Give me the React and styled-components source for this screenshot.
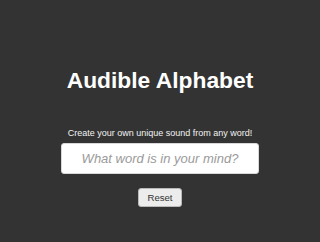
import styled, { createGlobalStyle } from 'styled-components'

const GlobalStyle = createGlobalStyle`
  html, body {
    margin: 0;
    padding: 0;
    background: #333333;
  }
  body {
    font-family: "Liberation Sans", Arial, Helvetica, sans-serif;
  }
`

const Page = styled.main`
  min-height: 242px;
  display: flex;
  flex-direction: column;
  align-items: center;
  padding-top: 66px;
  box-sizing: border-box;
`

const Title = styled.h1`
  margin: 0;
  font-size: 22.8px;
  line-height: 28px;
  font-weight: 700;
  color: #ffffff;
`

const Tagline = styled.p`
  margin: 33px 0 0;
  font-size: 9px;
  line-height: 12px;
  color: #f2f2f2;
  white-space: nowrap;
`

const WordInput = styled.input`
  margin-top: 4px;
  width: 198px;
  height: 31px;
  box-sizing: border-box;
  border: 1px solid #d8d8d8;
  border-radius: 3px;
  background: #ffffff;
  font-family: inherit;
  font-size: 13px;
  font-style: italic;
  text-align: center;
  color: #333;
  outline: none;

  &::placeholder {
    color: #9a9a9a;
  }
`

const ResetButton = styled.button`
  margin-top: 14px;
  width: 44px;
  height: 19px;
  padding: 0;
  box-sizing: border-box;
  border: 1px solid #b9b9b9;
  border-radius: 3px;
  background: #ececec;
  color: #333;
  font-family: inherit;
  font-size: 9.6px;
  cursor: pointer;
`

export default function App() {
  return (
    <>
      <GlobalStyle />
      <Page>
        <Title>Audible Alphabet</Title>
        <Tagline>Create your own unique sound from any word!</Tagline>
        <WordInput placeholder="What word is in your mind?" />
        <ResetButton>Reset</ResetButton>
      </Page>
    </>
  )
}
